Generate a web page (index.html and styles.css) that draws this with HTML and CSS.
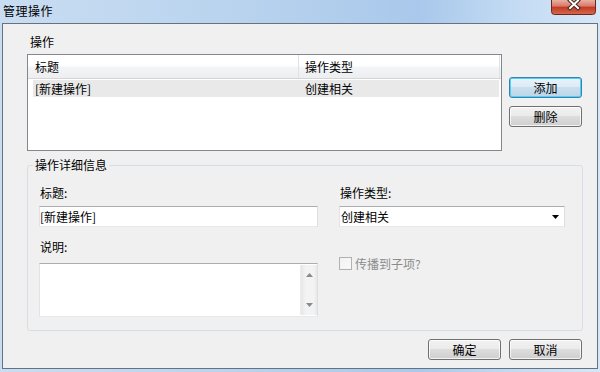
FILE: index.html
```html
<!DOCTYPE html>
<html lang="zh-CN">
<head>
<meta charset="utf-8">
<title>管理操作</title>
<link rel="stylesheet" href="styles.css">
</head>
<body>
<div class="window">
  <div class="titlebar">
    <span class="title">管理操作</span>
    <button class="close" aria-label="关闭">
      <svg width="45" height="15" viewBox="0 0 45 15">
        <defs>
          <linearGradient id="cg" x1="0" y1="0" x2="0" y2="1">
            <stop offset="0" stop-color="#eab0a0"/>
            <stop offset="0.42" stop-color="#d9796a"/>
            <stop offset="0.5" stop-color="#c43a22"/>
            <stop offset="1" stop-color="#d56a52"/>
          </linearGradient>
        </defs>
        <path d="M0.5 0 V11.5 Q0.5 14.5 3.5 14.5 H41.5 Q44.5 14.5 44.5 11.5 V0" fill="url(#cg)" stroke="#6b271c"/>
        <path d="M19 0.5 L27 8 M27 0.5 L19 8" stroke="#3d2620" stroke-width="4" stroke-linecap="square"/>
        <path d="M19 0.5 L27 8 M27 0.5 L19 8" stroke="#ffffff" stroke-width="2" stroke-linecap="square"/>
      </svg>
    </button>
  </div>
  <div class="client">
    <div class="sec-label">操作</div>
    <div class="top-row">
      <div class="listbox">
        <div class="lv-header">
          <div class="lv-col c1">标题</div>
          <div class="lv-col c2">操作类型</div>
          <div class="lv-rest"></div>
        </div>
        <div class="lv-row">
          <div class="lv-cell c1">[新建操作]</div>
          <div class="lv-cell c2">创建相关</div>
        </div>
      </div>
      <div class="side-buttons">
        <button class="btn default">添加</button>
        <button class="btn">删除</button>
      </div>
    </div>
    <fieldset class="details">
      <legend>操作详细信息</legend>
      <div class="details-grid">
        <div class="field-label">标题:</div>
        <div class="field-label">操作类型:</div>
        <div class="textbox">[新建操作]</div>
        <div class="combo">
          <span class="combo-text">创建相关</span>
          <svg class="combo-arrow" width="7" height="4" viewBox="0 0 7 4"><path d="M0 0 H7 L3.5 4 Z" fill="#000"/></svg>
        </div>
        <div class="field-label gap-top">说明:</div>
        <div class="gap-top"></div>
        <div class="textarea">
          <div class="ta-body"></div>
          <div class="scrollbar">
            <svg width="7" height="4" viewBox="0 0 7 4"><path d="M0 4 H7 L3.5 0 Z" fill="#8a8a8a"/></svg>
            <svg width="7" height="4" viewBox="0 0 7 4"><path d="M0 0 H7 L3.5 4 Z" fill="#8a8a8a"/></svg>
          </div>
        </div>
        <label class="check"><span class="box"></span>传播到子项?</label>
      </div>
    </fieldset>
    <div class="bottom-buttons">
      <button class="btn">确定</button>
      <button class="btn">取消</button>
    </div>
  </div>
</div>
</body>
</html>
```
FILE: styles.css
```css
* { box-sizing: border-box; }
html, body { margin: 0; padding: 0; }
body {
  width: 600px;
  height: 372px;
  overflow: hidden;
  font-family: "Noto Sans CJK SC", "Liberation Sans", sans-serif;
  font-size: 12px;
  color: #000;
}
.window {
  width: 600px;
  height: 372px;
  display: flex;
  flex-direction: column;
  background: linear-gradient(90deg, #c9ddf2 0%, #b9d3ee 40%, #a9c8eb 70%, #c2daf3 85%, #d6e7f7 100%);
}
.titlebar {
  height: 23px;
  display: flex;
  align-items: flex-start;
  padding-left: 3px;
}
.title {
  margin-top: 4px;
  line-height: 14px;
  letter-spacing: 0.5px;
}
.close {
  margin-left: auto;
  margin-right: 4px;
  width: 45px;
  height: 15px;
  padding: 0;
  border: 0;
  background: none;
  display: block;
}
.close svg { display: block; }
.client {
  margin: 0 2px 3px 2px;
  height: 346px;
  border: 1px solid #66737f;
  background: #f0f0f0;
  padding: 11px 14px 0 24px;
  display: flex;
  flex-direction: column;
}
.sec-label {
  line-height: 14px;
  padding-left: 3px;
  margin-bottom: 5px;
}
.top-row {
  display: flex;
  align-items: flex-start;
}
.listbox {
  width: 475px;
  height: 97px;
  border: 1px solid #828790;
  background: #fff;
}
.lv-header {
  display: flex;
  height: 24px;
  border-bottom: 1px solid #d5d5d5;
  background: linear-gradient(#ffffff 0%, #ffffff 45%, #f3f4f6 55%, #eceef1 100%);
}
.lv-col {
  line-height: 23px;
  border-right: 1px solid #dfe3e8;
}
.lv-header .c1 { width: 271px; padding-left: 7px; }
.lv-header .c2 { width: 201px; padding-left: 6px; }
.lv-rest { flex: 1; }
.lv-row {
  margin: 1px 0 0 5px;
  width: 466px;
  height: 17px;
  background: #e9e9e9;
  display: flex;
  line-height: 17px;
}
.lv-row .c1 { width: 266px; padding-left: 2px; }
.lv-row .c2 { padding-left: 6px; }
.side-buttons {
  margin-left: 7px;
  margin-top: 23px;
  display: flex;
  flex-direction: column;
  gap: 8px;
}
.btn {
  width: 73px;
  height: 21px;
  border: 1px solid #707070;
  border-radius: 3px;
  background: linear-gradient(#f2f2f2 0%, #ebebeb 45%, #dddddd 50%, #cfcfcf 100%);
  box-shadow: inset 0 0 0 1px rgba(255, 255, 255, 0.75);
  font: inherit;
  line-height: 19px;
  padding: 0;
  color: #000;
}
.btn.default {
  border-color: #3c7fb1;
  box-shadow: inset 0 0 0 1px #4fd0fb;
  background: linear-gradient(#eaf4fa 0%, #dcebf5 45%, #c8dfee 50%, #bcd6e8 100%);
}
.details {
  margin: 7px 0 0 0;
  width: 556px;
  height: 173px;
  border: 1px solid #d5dfe5;
  border-radius: 3px;
  padding: 0;
  min-width: 0;
}
.details legend {
  margin-left: 5px;
  padding: 0 2px;
  line-height: 14px;
}
.details-grid {
  padding: 14px 0 0 11px;
  display: grid;
  grid-template-columns: 279px 226px;
  column-gap: 21px;
}
.field-label {
  line-height: 14px;
  padding-left: 1px;
  height: 14px;
}
.textbox, .combo, .textarea {
  border: 1px solid;
  border-color: #abadb3 #dbdfe6 #e3e9ef #e2e3ea;
  background: #fff;
}
.textbox {
  margin-top: 6px;
  height: 21px;
  line-height: 19px;
  padding-left: 0;
}
.combo {
  margin-top: 6px;
  height: 21px;
  display: flex;
  align-items: center;
  line-height: 19px;
  padding: 0 5px 0 1px;
}
.combo-text { flex: 1; }
.combo-arrow { display: block; margin-top: 1px; }
.gap-top { margin-top: 13px; }
.textarea {
  margin-top: 9px;
  height: 54px;
  display: flex;
}
.ta-body { flex: 1; }
.scrollbar {
  width: 17px;
  margin: 1px 0;
  background: linear-gradient(90deg, #e6e6e6 0%, #f3f3f3 30%, #f3f3f3 80%, #e8e8e8 100%);
  border-left: 1px solid #ececec;
  display: flex;
  flex-direction: column;
  justify-content: space-between;
  align-items: center;
  padding: 8px 0 8px 1px;
}
.scrollbar svg { display: block; }
.check {
  margin-top: 3px;
  display: flex;
  align-items: center;
  gap: 3px;
  height: 13px;
  line-height: 14px;
  color: #8c8c8c;
  align-self: start;
}
.box {
  width: 13px;
  height: 13px;
  border: 1px solid #b1b1b1;
  background: linear-gradient(135deg, #f2f2f2, #f9f9f9);
}
.bottom-buttons {
  margin-top: 8px;
  display: flex;
  justify-content: flex-end;
  gap: 8px;
  padding-right: 1px;
}
```
